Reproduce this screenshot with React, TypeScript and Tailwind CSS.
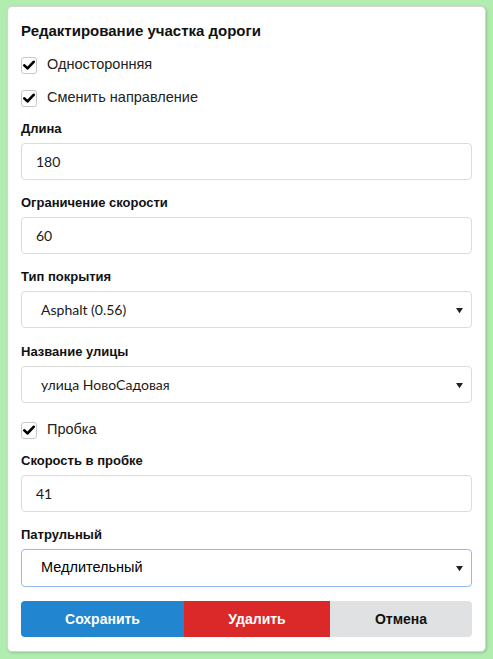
import React from 'react'

const font = { fontFamily: 'Lato, "Liberation Sans", Arial, sans-serif' }
const arial = { fontFamily: '"Liberation Sans", Arial, sans-serif' }

function Check({ label, top }: { label: string; top: string }) {
  return (
    <div className={`flex items-center h-[20px] ${top}`}>
      <span className="w-[16px] h-[17px] border border-[#c7c7c7] rounded-[3px] bg-white flex items-center justify-center">
        <svg viewBox="0 0 16 16" className="w-[12px] h-[12px]">
          <path d="M1.8 8.5 L6 12.5 L14.2 3.8" fill="none" stroke="#000" strokeWidth="3.6" strokeLinecap="round" strokeLinejoin="round" />
        </svg>
      </span>
      <span className="ml-[10px] text-[14.5px] text-[#222]" style={arial}>{label}</span>
    </div>
  )
}

function Label({ text, top }: { text: string; top: string }) {
  return (
    <div className={`h-[18px] leading-[18px] text-[13px] font-bold text-[#111] ${top}`} style={arial}>
      {text}
    </div>
  )
}

function TextField({ value }: { value: string }) {
  return (
    <input
      readOnly
      defaultValue={value}
      className="mt-[5px] h-[37px] w-full border border-[#dcdcdd] rounded-[4px] px-[14px] text-[14px] text-[#1a1a1a] bg-white outline-none"
      style={font}
    />
  )
}

function SelectField({ value, focused }: { value: string; focused?: boolean }) {
  return (
    <div
      className={`relative mt-[5px] w-full rounded-[4px] bg-white flex items-center pl-[19px] text-[14px] text-[#1a1a1a] border ${
        focused ? 'h-[38px] border-[#96b8ee]' : 'h-[37px] border-[#dcdcdd]'
      }`}
    >
      <span className={focused ? 'text-[14.5px] text-black' : ''} style={focused ? arial : font}>{value}</span>
      <svg viewBox="0 0 8 8" className="absolute right-[8px] top-[15px] w-[7px] h-[7px]">
        <path d="M0 1 L8 1 L4 7 Z" fill="#222" />
      </svg>
    </div>
  )
}

export default function App() {
  return (
    <div className="min-h-screen bg-[#b2edb0] pl-[7px] pt-[6px] pb-[7px]" style={font}>
      <div className="w-[479px] bg-white border border-[#d4d4d5] rounded-[5px] shadow-[1px_1px_3px_rgba(0,0,0,0.18)] px-[13px] pt-[13px] pb-[14px] flex flex-col">
        <div className="h-[22px] leading-[22px] text-[15px] font-bold text-[#111]" style={arial}>
          Редактирование участка дороги
        </div>
        <Check label="Односторонняя" top="mt-[13px]" />
        <Check label="Сменить направление" top="mt-[13px]" />
        <Label text="Длина" top="mt-[12px]" />
        <TextField value="180" />
        <Label text="Ограничение скорости" top="mt-[14px]" />
        <TextField value="60" />
        <Label text="Тип покрытия" top="mt-[14px]" />
        <SelectField value="Asphalt (0.56)" />
        <Label text="Название улицы" top="mt-[15px]" />
        <SelectField value="улица НовоСадовая" />
        <Check label="Пробка" top="mt-[17px]" />
        <Label text="Скорость в пробке" top="mt-[12px]" />
        <TextField value="41" />
        <Label text="Патрульный" top="mt-[14px]" />
        <SelectField value="Медлительный" focused />
        <div className="mt-[14px] flex h-[36px] text-[14px] font-bold" style={arial}>
          <button className="w-[163px] bg-[#2185d0] text-white rounded-l-[4px]">Сохранить</button>
          <button className="w-[146px] bg-[#db2828] text-white">Удалить</button>
          <button className="flex-1 bg-[#e0e1e2] text-[#111] rounded-r-[4px]">Отмена</button>
        </div>
      </div>
    </div>
  )
}
